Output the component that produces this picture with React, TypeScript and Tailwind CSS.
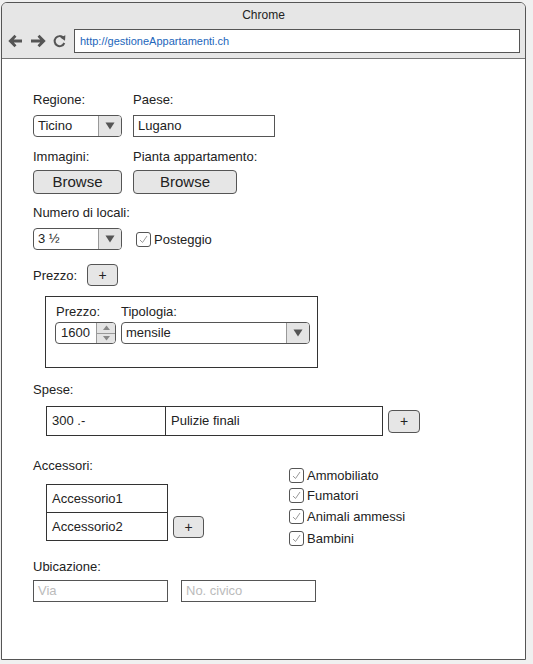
import React from 'react';

const font = { fontFamily: '"Liberation Sans", Arial, sans-serif' };

function Caret() {
  return (
    <svg width="10" height="8" viewBox="0 0 10 8">
      <path d="M0.5 0.5 L9.5 0.5 L5 7.5 Z" fill="#555" />
    </svg>
  );
}

function Select({ value, className }: { value: string; className: string }) {
  return (
    <div className={`flex border border-[#555] rounded-[4px] overflow-hidden bg-white ${className}`}>
      <div className="flex-1 flex items-center pl-[4px] text-[13px]">{value}</div>
      <div className="w-[23px] flex items-center justify-center bg-[#e4e4e4] border-l border-[#999]">
        <Caret />
      </div>
    </div>
  );
}

function Check({ label, className = '' }: { label: string; className?: string }) {
  return (
    <div className={`flex items-center ${className}`}>
      <div className="w-[15px] h-[15px] border border-[#555] rounded-[3px] flex items-center justify-center bg-white">
        <svg width="11" height="11" viewBox="0 0 11 11">
          <polyline points="2,6 4.5,8.5 9,2" fill="none" stroke="#999" strokeWidth="1" />
        </svg>
      </div>
      <span className="ml-[3px] text-[13px] leading-[15px]">{label}</span>
    </div>
  );
}

function PlusButton({ className = '' }: { className?: string }) {
  return (
    <div
      className={`flex items-center justify-center border border-[#555] rounded-[4px] bg-[#e6e6e6] text-[14px] ${className}`}
    >
      +
    </div>
  );
}

function Label({ children, className = '' }: { children: React.ReactNode; className?: string }) {
  return <div className={`text-[13px] leading-[15px] ${className}`}>{children}</div>;
}

export default function App() {
  return (
    <div className="w-[533px] h-[664px] bg-[#f0f0f0] pt-[2px] pl-[1px] text-[#222]" style={font}>
      <div className="w-[525px] h-[658px] border border-[#555] rounded-t-[6px] bg-white overflow-hidden flex flex-col">
        {/* browser chrome */}
        <div className="h-[56px] bg-[#e6e6e6] border-b border-[#777] flex flex-col">
          <div className="pt-[5px] text-center text-[12px] leading-[14px]">Chrome</div>
          <div className="mt-[7px] flex items-center pl-[6px]">
            <svg width="15" height="14" viewBox="0 0 15 14">
              <path d="M14 7 H2.5 M7.5 1.8 L2.3 7 L7.5 12.2" fill="none" stroke="#555" strokeWidth="2.8" />
            </svg>
            <svg width="16" height="14" viewBox="0 0 16 14" className="ml-[7px]">
              <path d="M1 7 H13.5 M8.5 1.8 L13.7 7 L8.5 12.2" fill="none" stroke="#555" strokeWidth="2.8" />
            </svg>
            <svg width="14" height="14" viewBox="0 0 14 14" className="ml-[7px]">
              <path d="M11.3 9 A5 5 0 1 1 10.4 3.8" fill="none" stroke="#555" strokeWidth="2" />
              <path d="M7.2 3.6 L12.4 1.2 L12 6.8 Z" fill="#555" />
            </svg>
            <div className="ml-[7px] w-[446px] h-[24px] border border-[#555] bg-white flex items-center pl-[5px] text-[11px] text-[#2266bb]">
              http://gestioneAppartamenti.ch
            </div>
          </div>
        </div>

        {/* form */}
        <div className="pl-[31px] pt-[33px] flex flex-col">
          <div className="flex">
            <Label className="w-[100px]">Regione:</Label>
            <Label>Paese:</Label>
          </div>
          <div className="flex mt-[8px]">
            <Select value="Ticino" className="w-[89px] h-[22px]" />
            <div className="ml-[11px] w-[142px] h-[22px] border border-[#555] flex items-center pl-[4px] text-[13px]">
              Lugano
            </div>
          </div>

          <div className="flex mt-[12px]">
            <Label className="w-[100px]">Immagini:</Label>
            <Label>Pianta appartamento:</Label>
          </div>
          <div className="flex mt-[6px]">
            <div className="w-[89px] h-[24px] border border-[#555] rounded-[4px] bg-[#e6e6e6] flex items-center justify-center text-[15px]">
              Browse
            </div>
            <div className="ml-[11px] w-[104px] h-[24px] border border-[#555] rounded-[4px] bg-[#e6e6e6] flex items-center justify-center text-[15px]">
              Browse
            </div>
          </div>

          <Label className="mt-[11px]">Numero di locali:</Label>
          <div className="flex items-center mt-[8px]">
            <Select value="3 ½" className="w-[89px] h-[22px]" />
            <Check label="Posteggio" className="ml-[14px]" />
          </div>

          <div className="flex items-center mt-[14px]">
            <Label>Prezzo:</Label>
            <PlusButton className="ml-[10px] w-[31px] h-[22px]" />
          </div>

          <div className="ml-[12px] mt-[10px] w-[273px] h-[72px] border border-[#333] pl-[9px] pt-[7px]">
            <div className="flex">
              <Label className="w-[66px] pl-[1px]">Prezzo:</Label>
              <Label>Tipologia:</Label>
            </div>
            <div className="flex mt-[3px]">
              <div className="w-[61px] h-[22px] flex border border-[#555] rounded-[4px] overflow-hidden">
                <div className="flex-1 flex items-center pl-[5px] text-[13px]">1600</div>
                <div className="w-[19px] flex flex-col bg-[#e4e4e4] border-l border-[#999]">
                  <div className="flex-1 flex items-center justify-center border-b border-[#999]">
                    <svg width="7" height="5" viewBox="0 0 7 5">
                      <path d="M0 5 L3.5 0.5 L7 5 Z" fill="#888" />
                    </svg>
                  </div>
                  <div className="flex-1 flex items-center justify-center">
                    <svg width="7" height="5" viewBox="0 0 7 5">
                      <path d="M0 0 L7 0 L3.5 4.5 Z" fill="#888" />
                    </svg>
                  </div>
                </div>
              </div>
              <Select value="mensile" className="ml-[5px] w-[189px] h-[22px]" />
            </div>
          </div>

          <Label className="mt-[14px]">Spese:</Label>
          <div className="flex items-center mt-[9px] ml-[13px]">
            <div className="flex w-[337px] h-[30px] border border-[#333]">
              <div className="w-[119px] border-r border-[#333] flex items-center pl-[5px] text-[13px]">300 .-</div>
              <div className="flex-1 flex items-center pl-[5px] text-[13px]">Pulizie finali</div>
            </div>
            <PlusButton className="ml-[5px] w-[32px] h-[23px]" />
          </div>

          <div className="flex mt-[22px]">
            <div className="flex flex-col w-[256px]">
              <Label>Accessori:</Label>
              <div className="flex items-end mt-[11px] ml-[13px]">
                <div className="w-[122px] border border-[#333] flex flex-col">
                  <div className="h-[28px] flex items-center pl-[5px] text-[13px] border-b border-[#333]">Accessorio1</div>
                  <div className="h-[27px] flex items-center pl-[5px] text-[13px]">Accessorio2</div>
                </div>
                <PlusButton className="ml-[5px] mb-[3px] w-[31px] h-[22px]" />
              </div>
            </div>
            <div className="flex flex-col pt-[10px]">
              <Check label="Ammobiliato" />
              <Check label="Fumatori" className="mt-[5px]" />
              <Check label="Animali ammessi" className="mt-[6px]" />
              <Check label="Bambini" className="mt-[7px]" />
            </div>
          </div>

          <Label className="mt-[13px]">Ubicazione:</Label>
          <div className="flex mt-[6px]">
            <div className="w-[135px] h-[22px] border border-[#555] flex items-center pl-[4px] text-[13px] text-[#bbb]">Via</div>
            <div className="ml-[13px] w-[135px] h-[22px] border border-[#555] flex items-center pl-[4px] text-[13px] text-[#bbb]">
              No. civico
            </div>
          </div>
        </div>
      </div>
    </div>
  );
}
